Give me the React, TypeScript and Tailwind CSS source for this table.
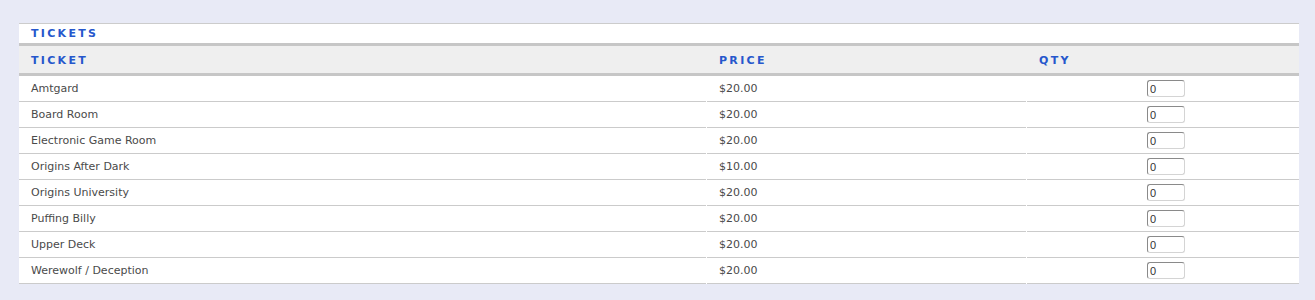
import React from "react";

type Ticket = { name: string; price: string };

const tickets: Ticket[] = [
  { name: "Amtgard", price: "$20.00" },
  { name: "Board Room", price: "$20.00" },
  { name: "Electronic Game Room", price: "$20.00" },
  { name: "Origins After Dark", price: "$10.00" },
  { name: "Origins University", price: "$20.00" },
  { name: "Puffing Billy", price: "$20.00" },
  { name: "Upper Deck", price: "$20.00" },
  { name: "Werewolf / Deception", price: "$20.00" },
];

const font = "font-['Verdana','DejaVu_Sans',sans-serif]";
const heading = "text-[11px] font-bold tracking-[2.3px] text-[#2657cc]";

const App = () => {
  return (
    <div className={`min-h-[300px] bg-[#e8eaf6] pt-[23px] pl-[19px] pr-[16px] ${font}`}>
      <div className="w-[1280px] bg-white border-t border-[#cccccc]">
        {/* TITLE */}
        <div className={`h-[19px] flex items-center pt-[2px] px-3 ${heading}`}>TICKETS</div>

        {/* HEADER */}
        <div className="grid grid-cols-[687px_319px_272px] gap-x-px h-[33px] bg-[#efefef] border-y-[3px] border-[#c6c6c6]">
          <div className={`flex items-center pt-[3px] px-3 ${heading}`}>TICKET</div>
          <div className={`flex items-center pt-[3px] px-3 ${heading}`}>PRICE</div>
          <div className={`flex items-center pt-[3px] px-3 ${heading}`}>QTY</div>
        </div>

        {/* ROWS */}
        {tickets.map((t) => (
          <div key={t.name} className="grid grid-cols-[687px_319px_272px] gap-x-px text-[11px] text-[#4a4a4a]">
            <div className="h-[26px] flex items-center pt-[2px] px-3 border-b border-[#cbcbcb]">{t.name}</div>
            <div className="h-[26px] flex items-center pt-[2px] px-3 border-b border-[#cbcbcb]">{t.price}</div>
            <div className="h-[26px] flex items-center pl-[120px] border-b border-[#cbcbcb]">
              <input
                defaultValue="0"
                className="w-[38px] h-[17px] pl-[2px] text-[11px] text-[#333333] bg-white rounded-[3px] border border-[#d4d4d4] border-t-[#8a8a8a] border-l-[#8a8a8a] outline-none font-['Liberation_Sans',Arial,sans-serif]"
              />
            </div>
          </div>
        ))}
      </div>
    </div>
  );
};

export default App;
